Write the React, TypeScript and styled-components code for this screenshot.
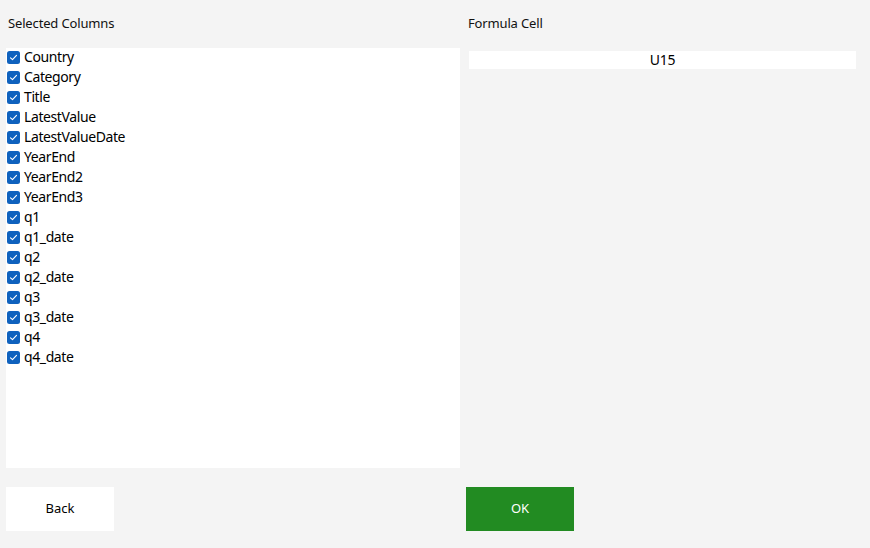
import React from "react";
import styled, { createGlobalStyle } from "styled-components";

const Global = createGlobalStyle`
  html, body { margin: 0; padding: 0; background: #f4f4f4; }
  body { font-family: "Noto Sans", "Open Sans", sans-serif; color: #000; }
`;

const Page = styled.div`
  width: 870px;
  height: 548px;
  box-sizing: border-box;
  padding: 0 6px;
  display: grid;
  grid-template-columns: 454px 1fr;
  grid-template-rows: 48px 420px 19px 44px;
  column-gap: 6px;
`;

const Label = styled.div<{ $indent: number }>`
  font-size: 13px;
  padding-left: ${(p) => p.$indent}px;
  padding-top: 14px;
  line-height: 18px;
  letter-spacing: -0.15px;
  color: #111;
`;

const ListBox = styled.div`
  background: #fff;
  display: flex;
  flex-direction: column;
`;

const Row = styled.label`
  height: 20px;
  display: flex;
  align-items: center;
  gap: 4px;
  padding-left: 1px;
  font-size: 14px;
  line-height: 18px;
  letter-spacing: -0.4px;
  color: #000;
`;

const RowText = styled.span`
  margin-bottom: 2px;
`;

const Box = styled.span`
  width: 13px;
  height: 13px;
  border-radius: 2.5px;
  background: #0f62be;
  display: flex;
  align-items: center;
  justify-content: center;
  flex-shrink: 0;
  margin-bottom: 1px;
`;

const RightCol = styled.div`
  padding: 3px 8px 0 3px;
`;

const Input = styled.div`
  height: 18px;
  background: #fff;
  font-size: 14px;
  line-height: 18px;
  letter-spacing: -0.2px;
  text-align: center;
`;

const Spacer = styled.div``;

const Button = styled.button<{ $primary?: boolean }>`
  width: 108px;
  height: 44px;
  border: none;
  background: ${(p) => (p.$primary ? "#228b22" : "#fff")};
  color: ${(p) => (p.$primary ? "#fff" : "#000")};
  font-family: inherit;
  font-size: 13px;
  padding: 0 0 2px;
`;

const columns = [
  "Country",
  "Category",
  "Title",
  "LatestValue",
  "LatestValueDate",
  "YearEnd",
  "YearEnd2",
  "YearEnd3",
  "q1",
  "q1_date",
  "q2",
  "q2_date",
  "q3",
  "q3_date",
  "q4",
  "q4_date",
];

const Check = () => (
  <Box>
    <svg width="9" height="9" viewBox="0 0 9 9">
      <path d="M1.5 4.8 L3.5 6.7 L7.5 2.3" fill="none" stroke="#fff" strokeWidth="1.1" strokeLinecap="round" strokeLinejoin="round" />
    </svg>
  </Box>
);

export default function App() {
  return (
    <>
      <Global />
      <Page>
        <Label $indent={2}>Selected Columns</Label>
        <Label $indent={2}>Formula Cell</Label>
        <ListBox>
          {columns.map((c) => (
            <Row key={c}>
              <Check />
              <RowText>{c}</RowText>
            </Row>
          ))}
        </ListBox>
        <RightCol>
          <Input>U15</Input>
        </RightCol>
        <Spacer />
        <Spacer />
        <div>
          <Button>Back</Button>
        </div>
        <div>
          <Button $primary>OK</Button>
        </div>
      </Page>
    </>
  );
}
